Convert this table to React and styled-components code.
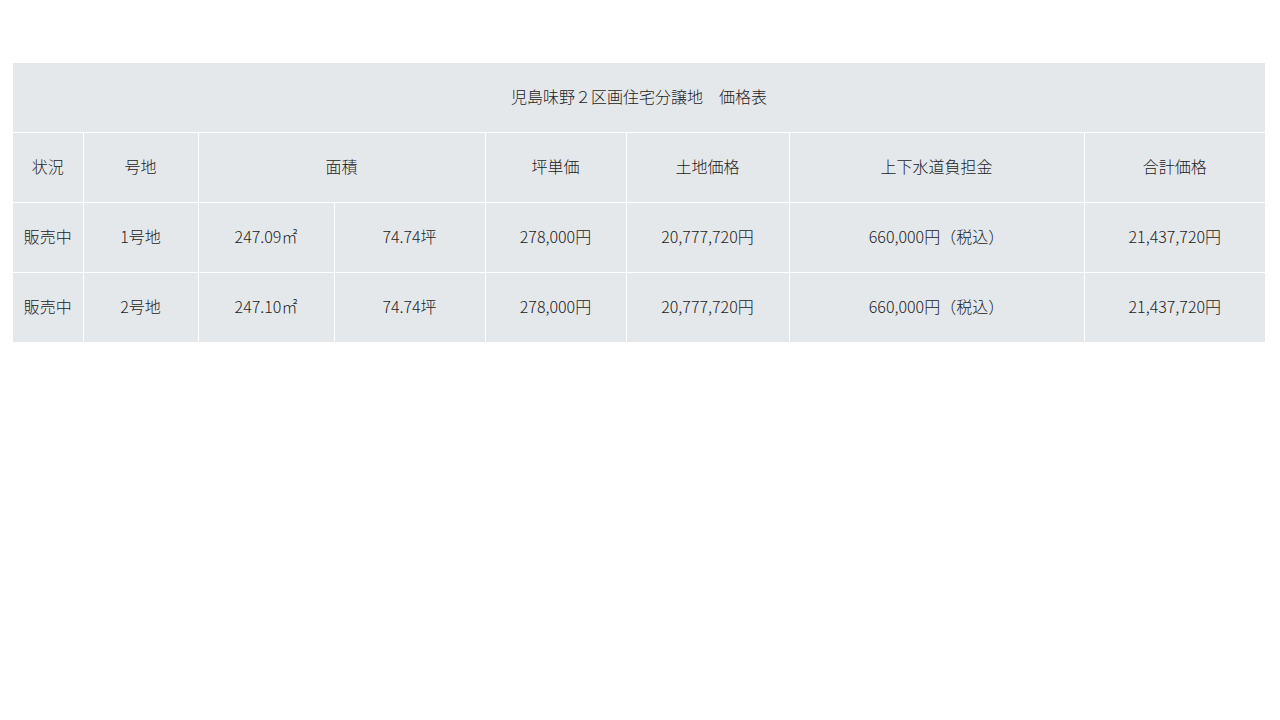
import React from 'react';
import styled, { createGlobalStyle } from 'styled-components';

const GlobalStyle = createGlobalStyle`
    body {
        margin: 0;
        background: #fff;
        font-family: "Noto Sans CJK JP", "Noto Sans", sans-serif;
        color: #222;
    }
`;

const Page = styled.div`
    padding: 63px 15px 0 13px;
`;

const PriceTable = styled.table`
    width: 1252px;
    border-collapse: collapse;
    table-layout: fixed;
    background: #e5e8eb;
    font-size: 16px;
    line-height: 1;

    td, th {
        border: 1px solid #fff;
        height: 66px;
        padding: 0 0 3px;
        text-align: center;
        vertical-align: middle;
        font-weight: 300;
    }

    tr:first-child th {
        border-top: none;
    }
    tr td:first-child, tr th:first-child {
        border-left: none;
    }
    tr td:last-child, tr th:last-child {
        border-right: none;
    }
    tr:last-child td {
        border-bottom: none;
    }
`;

const widths = [70, 115, 136, 151, 141, 163, 295, 181];

const rows = [
    { status: '販売中', lot: '1号地', m2: '247.09㎡', tsubo: '74.74坪' },
    { status: '販売中', lot: '2号地', m2: '247.10㎡', tsubo: '74.74坪' },
];

const App = () => {
    return (
        <Page>
            <GlobalStyle />
            <PriceTable>
                <colgroup>
                    {widths.map((w, i) => <col key={i} style={{ width: w }} />)}
                </colgroup>
                <thead>
                    <tr>
                        <th colSpan={8}>児島味野２区画住宅分譲地　価格表</th>
                    </tr>
                    <tr>
                        <th>状況</th>
                        <th>号地</th>
                        <th colSpan={2}>面積</th>
                        <th>坪単価</th>
                        <th>土地価格</th>
                        <th>上下水道負担金</th>
                        <th>合計価格</th>
                    </tr>
                </thead>
                <tbody>
                    {rows.map(r => (
                        <tr key={r.lot}>
                            <td>{r.status}</td>
                            <td>{r.lot}</td>
                            <td>{r.m2}</td>
                            <td>{r.tsubo}</td>
                            <td>278,000円</td>
                            <td>20,777,720円</td>
                            <td>660,000円（税込）</td>
                            <td>21,437,720円</td>
                        </tr>
                    ))}
                </tbody>
            </PriceTable>
        </Page>
    );
};

export default App;
